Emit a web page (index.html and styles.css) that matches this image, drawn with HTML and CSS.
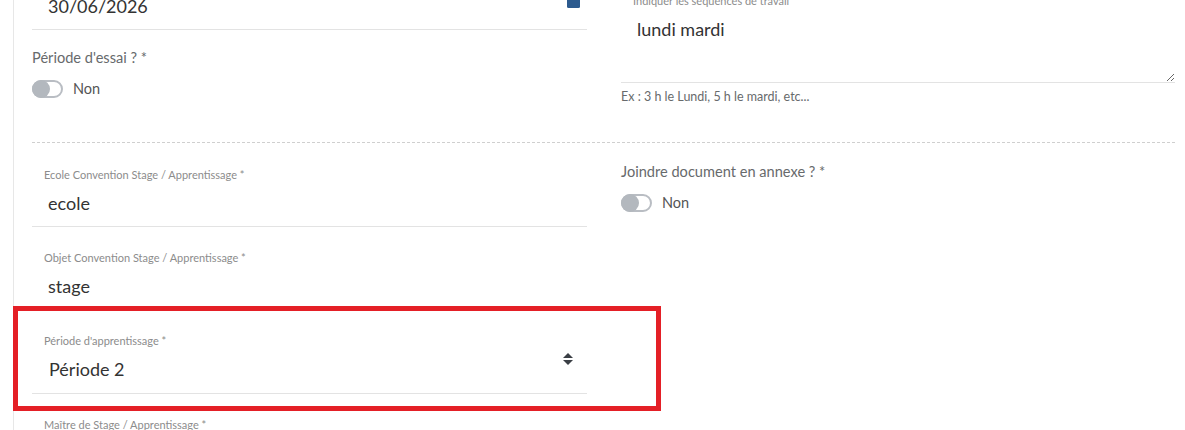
FILE: index.html
```html
<!DOCTYPE html>
<html lang="fr">
<head>
<meta charset="UTF-8">
<meta name="viewport" content="width=device-width, initial-scale=1.0">
<title>Contrat - Stage / Apprentissage</title>
<link rel="stylesheet" href="styles.css">
</head>
<body>
    <div class="page">
        <div class="section section-top">
            <div class="col">
                <div class="field">
                    <label class="field-label" for="dateFin">Date de fin *</label>
                    <div class="field-control">
                        <input class="field-input" type="text" id="dateFin" value="30/06/2026">
                        <svg class="calendar-icon" width="13" height="15" viewBox="0 0 13 15">
                            <rect x="0" y="2" width="13" height="13" rx="1.5" fill="#2c5a8e"/>
                            <rect x="3" y="0" width="2" height="4" fill="#2c5a8e"/>
                            <rect x="8" y="0" width="2" height="4" fill="#2c5a8e"/>
                        </svg>
                    </div>
                </div>
                <div class="question">
                    <div class="question-label">Période d'essai ? *</div>
                    <div class="switch">
                        <span class="switch-track"><span class="switch-knob"></span></span>
                        <span class="switch-text">Non</span>
                    </div>
                </div>
            </div>
            <div class="col col-offset">
                <div class="field">
                    <label class="field-label" for="sequences">Indiquer les séquences de travail</label>
                    <textarea class="field-textarea" id="sequences">lundi mardi</textarea>
                </div>
                <div class="help-text">Ex : 3 h le Lundi, 5 h le mardi, etc...</div>
            </div>
        </div>

        <div class="section section-bottom">
            <div class="col col-fields">
                <div class="field">
                    <label class="field-label" for="ecole">Ecole Convention Stage / Apprentissage *</label>
                    <input class="field-input" type="text" id="ecole" value="ecole">
                </div>
                <div class="field">
                    <label class="field-label" for="objet">Objet Convention Stage / Apprentissage *</label>
                    <input class="field-input" type="text" id="objet" value="stage">
                </div>
                <div class="field field-highlight">
                    <label class="field-label" for="periode">Période d'apprentissage *</label>
                    <div class="field-control">
                        <div class="field-select" id="periode">Période 2</div>
                        <svg class="sort-icon" width="10" height="12" viewBox="0 0 10 12">
                            <path d="M5 0 L10 5 L0 5 Z" fill="#3a3f45"/>
                            <path d="M0 7 L10 7 L5 12 Z" fill="#3a3f45"/>
                        </svg>
                    </div>
                    <div class="highlight-box"></div>
                </div>
                <div class="field">
                    <label class="field-label" for="maitre">Maître de Stage / Apprentissage *</label>
                    <input class="field-input" type="text" id="maitre" value="">
                </div>
            </div>
            <div class="col">
                <div class="question">
                    <div class="question-label">Joindre document en annexe ? *</div>
                    <div class="switch">
                        <span class="switch-track"><span class="switch-knob"></span></span>
                        <span class="switch-text">Non</span>
                    </div>
                </div>
            </div>
        </div>
    </div>
</body>
</html>
```

FILE: styles.css
```css
body {
    font-family: Lato, "Open Sans", sans-serif;
    background-color: #fff;
    margin: 0;
    padding: 0;
    overflow: hidden;
}

.page {
    margin: -30px 0 0 13px;
    padding: 0 10px 0 18px;
    border-left: 1px solid #e7e7e7;
}

.section {
    display: grid;
    grid-template-columns: 555px 554px;
    column-gap: 34px;
}

.section-top {
    padding-bottom: 37px;
    border-bottom: 1px dashed #cfcfcf;
}

.section-top .field {
    margin-bottom: 0;
}

.section-bottom {
    padding-top: 19px;
}

.col-offset {
    padding-top: 24px;
}

.col-fields {
    padding-top: 6px;
}

/* floating label fields */
.field {
    position: relative;
    margin-bottom: 24px;
}

.field-label {
    display: block;
    font-size: 11px;
    line-height: 14px;
    color: #8c8c8c;
    padding-left: 12px;
    margin-bottom: 9px;
}

.field-control {
    display: flex;
    align-items: flex-start;
    border-bottom: 1px solid #e3e3e3;
}

.field-input,
.field-select,
.field-textarea {
    display: block;
    width: 100%;
    box-sizing: border-box;
    font-family: Lato, "Open Sans", sans-serif;
    font-size: 18px;
    line-height: 24px;
    color: #333;
    border: none;
    border-bottom: 1px solid #e3e3e3;
    outline: none;
    background: transparent;
    margin: 0;
}

.field-input {
    height: 36px;
    padding: 0 16px 11px;
}

.field-control .field-input,
.field-control .field-select {
    border-bottom: none;
}

.field-select {
    height: 36px;
    padding: 0 17px 12px;
}

.field-textarea {
    height: 66px;
    padding: 0 16px;
    resize: vertical;
}

.calendar-icon {
    flex-shrink: 0;
    margin: 0 7px 0 0;
}

.sort-icon {
    flex-shrink: 0;
    margin: -4px 14px 0 0;
}

.help-text {
    font-size: 12.5px;
    line-height: 16px;
    color: #676a6c;
    margin-top: 6px;
}

/* yes / no questions */
.question {
    margin-top: 18px;
}

.section-bottom .question {
    margin-top: 0;
}

.question-label {
    font-size: 14.6px;
    line-height: 20px;
    color: #676a6c;
    margin-bottom: 11px;
}

.switch {
    display: flex;
    align-items: center;
    gap: 10px;
}

.switch-track {
    display: flex;
    width: 31px;
    height: 18px;
    box-sizing: border-box;
    border: 2px solid #b9bdc3;
    border-radius: 9px;
}

.switch-knob {
    width: 18px;
    height: 18px;
    margin: -2px;
    border-radius: 50%;
    background-color: #b3b8be;
}

.switch-text {
    font-size: 14.5px;
    line-height: 20px;
    color: #555;
}

/* annotation frame */
.highlight-box {
    position: absolute;
    top: -28px;
    left: -19px;
    right: -74px;
    bottom: -17px;
    border: 5px solid #e41f26;
    pointer-events: none;
}
```
